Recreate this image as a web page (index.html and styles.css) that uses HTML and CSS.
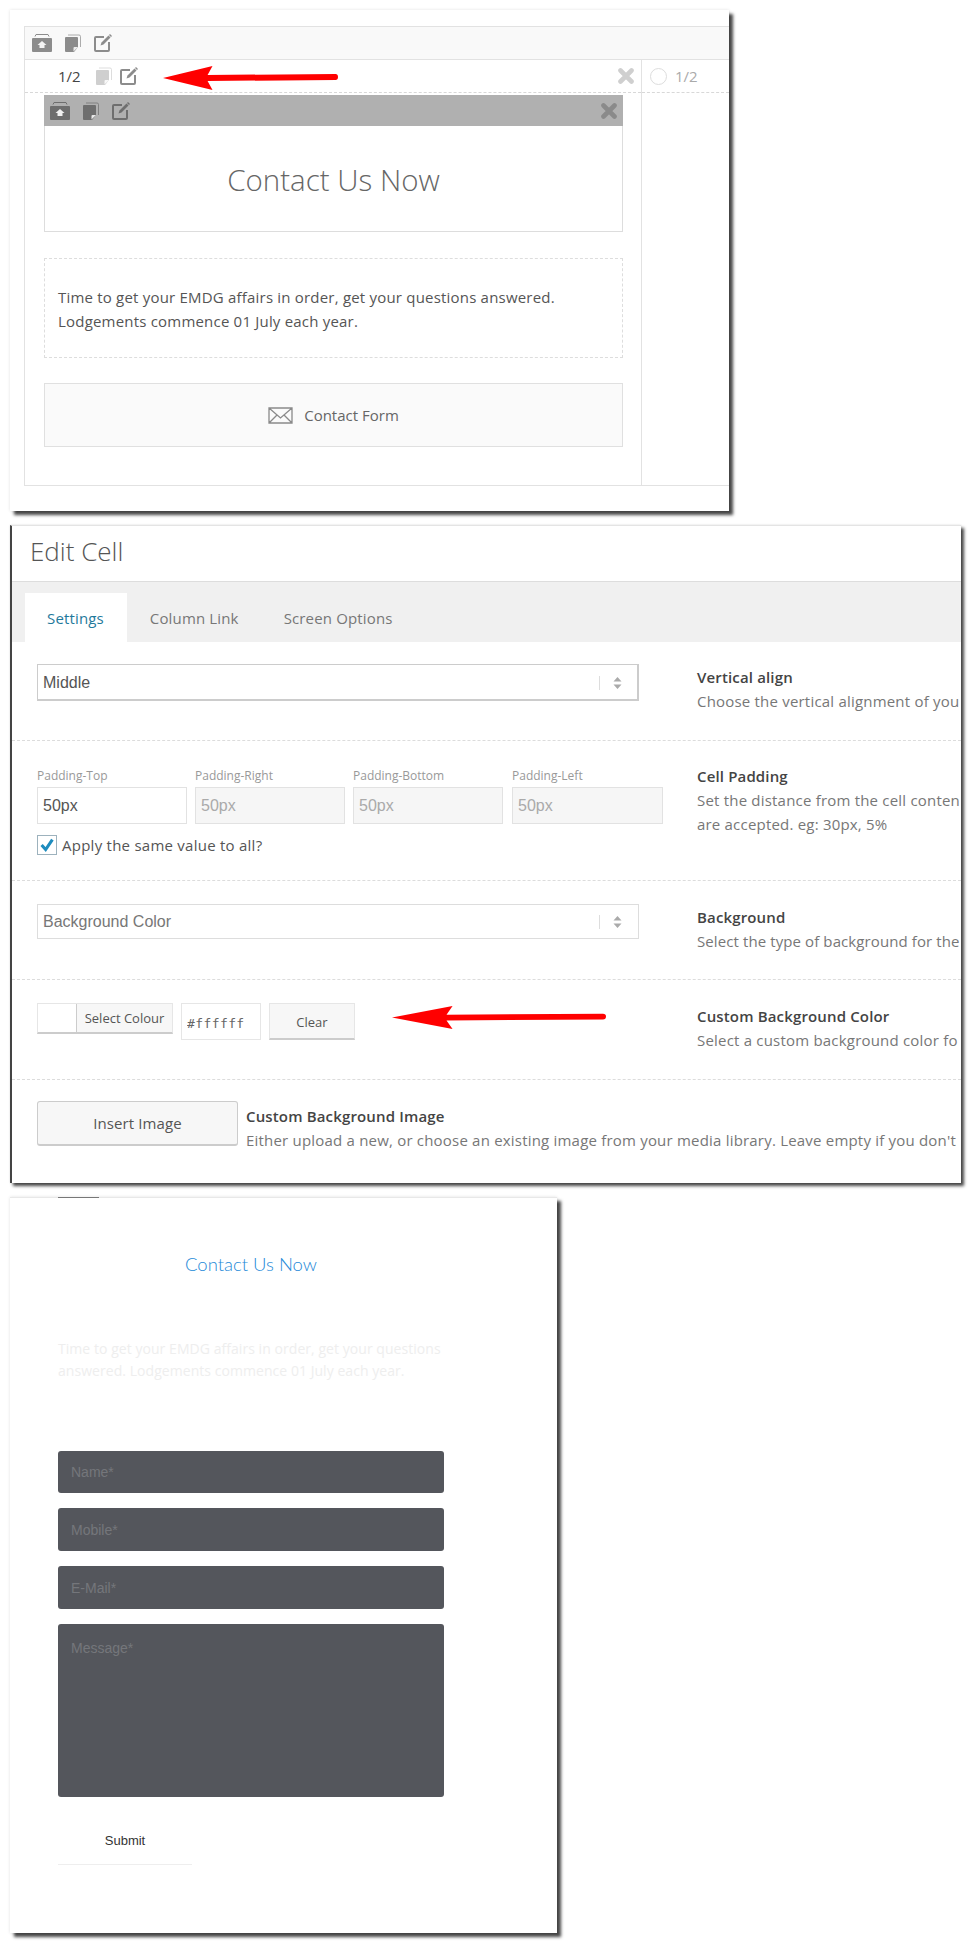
FILE: index.html
```html
<!DOCTYPE html>
<html lang="en">
<head>
<meta charset="utf-8">
<title>Edit Cell</title>
<link rel="stylesheet" href="styles.css">
</head>
<body>
<svg class="defs" width="0" height="0" aria-hidden="true">
  <symbol id="i-archive" viewBox="0 0 20 18">
    <path d="M3 2.500 4 .5h12l1 2" fill="none" stroke="currentColor" stroke-width="1"/>
    <rect x="0" y="4" width="20" height="14" rx="1" fill="currentColor"/>
    <path d="M10 7l4.500 4H12.500v3h-5v-3H5.500z" fill="#fff" fill-opacity=".9"/>
  </symbol>
  <symbol id="i-copy" viewBox="0 0 17 18">
    <path d="M4 1h11a1.500 1.500 0 0 1 1.500 1.500V13" fill="none" stroke="currentColor" stroke-width="1" opacity=".7"/>
    <path d="M1 4a1 1 0 0 1 1-1h11a1 1 0 0 1 1 1v9l-4 5H2a1 1 0 0 1-1-1z" fill="currentColor"/>
    <path d="M9.500 17.500V14q0-1 1-1H14z" fill="#fff" fill-opacity=".85"/>
  </symbol>
  <symbol id="i-edit" viewBox="0 0 18 18">
    <path d="M10 3H2a1 1 0 0 0-1 1v12a1 1 0 0 0 1 1h12a1 1 0 0 0 1-1V8" fill="none" stroke="currentColor" stroke-width="2"/>
    <path d="M6.500 11.500 7.500 8.500 14.500 1.500 16.500 3.500 9.500 10.500z" fill="currentColor"/>
    <path d="M15.500.5 17.500 2.500" stroke="currentColor" stroke-width="1.400"/>
  </symbol>
  <symbol id="i-x" viewBox="0 0 16 16">
    <path d="M2.500 2.500l11 11M13.500 2.500l-11 11" stroke="currentColor" stroke-width="4.600" stroke-linecap="round" fill="none"/>
  </symbol>
  <symbol id="i-updown" viewBox="0 0 9 12">
    <path d="M4.500 0 8.500 4.500H.5zM4.500 12 .5 7.500h8z" fill="currentColor"/>
  </symbol>
  <symbol id="i-arrow" viewBox="0 0 212 24" preserveAspectRatio="none">
    <path d="M0 12 60 0 54 9 209 8a3 3 0 0 1 0 6L54 15 60 24z" fill="#f00"/>
  </symbol>
</svg>

<section class="panel panel-grid">
  <svg class="arrow arrow-top"><use href="#i-arrow"/></svg>
  <div class="grid-table">
    <div class="grid-head">
      <svg class="ic ic-archive"><use href="#i-archive"/></svg>
      <svg class="ic ic-copy"><use href="#i-copy"/></svg>
      <svg class="ic ic-edit"><use href="#i-edit"/></svg>
    </div>
    <div class="grid-cols">
      <div class="col-main">
        <div class="cell-head">
          <span class="ratio">1/2</span>
          <svg class="ic ic-copy is-light"><use href="#i-copy"/></svg>
          <svg class="ic ic-edit"><use href="#i-edit"/></svg>
          <svg class="ic ic-x is-light"><use href="#i-x"/></svg>
        </div>
        <div class="block">
          <div class="block-head">
            <svg class="ic ic-archive"><use href="#i-archive"/></svg>
            <svg class="ic ic-copy"><use href="#i-copy"/></svg>
            <svg class="ic ic-edit"><use href="#i-edit"/></svg>
            <svg class="ic ic-x"><use href="#i-x"/></svg>
          </div>
          <div class="block-title">Contact Us Now</div>
          <div class="block-text">Time to get your EMDG affairs in order, get your questions answered.<br>Lodgements commence 01 July each year.</div>
          <div class="block-form">
            <svg class="envelope" viewBox="0 0 25 17"><path d="M1 1h23v15H1zM1 1l11.500 10L24 1M1 16l8-8M24 16l-8-8" fill="none" stroke="#8a8a8a" stroke-width="1.300"/></svg>
            <span>Contact Form</span>
          </div>
        </div>
      </div>
      <div class="col-side">
        <div class="cell-head side-head">
          <span class="radio"></span>
          <span class="ratio is-muted">1/2</span>
        </div>
      </div>
    </div>
  </div>
</section>

<section class="panel panel-edit">
  <svg class="arrow arrow-mid"><use href="#i-arrow"/></svg>
  <h1 class="edit-title">Edit Cell</h1>
  <nav class="tabs">
    <a class="tab is-active">Settings</a>
    <a class="tab">Column Link</a>
    <a class="tab">Screen Options</a>
  </nav>

  <div class="row row-valign">
    <div class="ctl">
      <div class="select is-focus"><span class="select-val">Middle</span><span class="select-sep"></span><svg class="updown"><use href="#i-updown"/></svg></div>
    </div>
    <div class="info">
      <div class="info-title">Vertical align</div>
      <div class="info-desc">Choose the vertical alignment of you</div>
    </div>
  </div>

  <div class="row row-padding">
    <div class="ctl">
      <div class="pads">
        <label class="pad"><span>Padding-Top</span><input value="50px"></label>
        <label class="pad"><span>Padding-Right</span><input value="50px" disabled></label>
        <label class="pad"><span>Padding-Bottom</span><input value="50px" disabled></label>
        <label class="pad"><span>Padding-Left</span><input value="50px" disabled></label>
      </div>
      <div class="apply">
        <span class="checkbox"><svg viewBox="0 0 20 20"><path d="M4 10l4.500 5L16 4" fill="none" stroke="#1e8cbe" stroke-width="3.400"/></svg></span>
        <span>Apply the same value to all?</span>
      </div>
    </div>
    <div class="info">
      <div class="info-title">Cell Padding</div>
      <div class="info-desc">Set the distance from the cell conten<br>are accepted. eg: 30px, 5%</div>
    </div>
  </div>

  <div class="row row-bg">
    <div class="ctl">
      <div class="select"><span class="select-val is-muted">Background Color</span><span class="select-sep"></span><svg class="updown"><use href="#i-updown"/></svg></div>
    </div>
    <div class="info">
      <div class="info-title">Background</div>
      <div class="info-desc">Select the type of background for the</div>
    </div>
  </div>

  <div class="row row-color">
    <div class="ctl color-ctl">
      <div class="color-pick"><span class="swatch"></span><span class="color-label">Select Colour</span></div>
      <input class="hex" value="#ffffff">
      <button class="clear" type="button">Clear</button>
    </div>
    <div class="info">
      <div class="info-title">Custom Background Color</div>
      <div class="info-desc">Select a custom background color fo</div>
    </div>
  </div>

  <div class="row row-image">
    <button class="insert" type="button">Insert Image</button>
    <div class="info image-info">
      <div class="info-title">Custom Background Image</div>
      <div class="info-desc">Either upload a new, or choose an existing image from your media library. Leave empty if you don't</div>
    </div>
  </div>
</section>

<section class="panel panel-form">
  <div class="frag"></div>
  <h2 class="form-title">Contact Us Now</h2>
  <p class="form-text">Time to get your EMDG affairs in order, get your questions answered. Lodgements commence 01 July each year.</p>
  <form class="form">
    <input class="field field-name" placeholder="Name*">
    <input class="field" placeholder="Mobile*">
    <input class="field" placeholder="E-Mail*">
    <textarea class="field field-msg" placeholder="Message*"></textarea>
    <button class="submit" type="button">Submit</button>
  </form>
</section>
</body>
</html>
```

FILE: styles.css
```css
* { box-sizing: border-box; }
html, body { margin: 0; padding: 0; height: 1944px; overflow: hidden; background: #fff; }
body { font-family: "Open Sans", sans-serif; color: #555; position: relative; padding-top: 10px; }
.defs { position: absolute; }
.ic { display: block; flex: none; color: #8c8c8c; }
.ic-archive { width: 20px; height: 18px; }
.ic-copy { width: 17px; height: 18px; }
.ic-edit { width: 18px; height: 18px; }
.ic-x { width: 16px; height: 16px; }
.is-light { color: #cfcfcf; }

.panel { position: relative; background: #fff; margin-left: 10px; }
.arrow { position: absolute; z-index: 2; overflow: visible; }
.arrow-top { left: 153px; top: 56px; width: 175px; height: 24px; }
.arrow-mid { left: 380px; top: 480px; width: 214px; height: 23px; }

.panel-grid { width: 719px; height: 501px; padding: 16px 0 0 14px;
  box-shadow: 4px 4px 3px rgba(0,0,0,.72), 0 0 3px rgba(0,0,0,.12); }
.grid-table { height: 460px; border: 1px solid #e2e2e2; border-right: 0; display: flex; flex-direction: column; }
.grid-head { height: 33px; flex: none; background: #f9f9f9; border-bottom: 1px solid #e2e2e2; display: flex; align-items: center; padding-left: 7px; }
.grid-head .ic-copy, .block-head .ic-copy { margin-left: 12px; }
.grid-head .ic-edit, .block-head .ic-edit { margin-left: 13px; }
.grid-cols { flex: 1; display: flex; }
.col-main { width: 617px; flex: none; border-right: 1px solid #e2e2e2; }
.col-side { flex: 1; }
.cell-head { height: 33px; border-bottom: 1px dashed #d8d8d8; display: flex; align-items: center; padding-left: 33px; font-size: 15px; }
.ratio { color: #444; width: 37px; flex: none; }
.ratio.is-muted { color: #aaa; width: auto; }
.cell-head .ic-edit { margin-left: 8px; }
.cell-head .ic-x { margin-left: auto; margin-right: 7px; }
.side-head { padding-left: 8px; }
.radio { width: 17px; height: 17px; border: 1px solid #ddd; border-radius: 50%; margin-right: 8px; }

.block { margin: 2px 0 0 19px; width: 579px; }
.block-head { height: 31px; background: #b0b0b0; display: flex; align-items: center; padding-left: 6px; }
.block-head .ic { color: #6e6e6e; }
.block-head .ic-x { color: #8a8a8a; margin-left: auto; margin-right: 6px; }
.block-title { height: 106px; border: 1px solid #ddd; border-top: 0; display: flex; align-items: center; justify-content: center;
  font-size: 29.500px; font-weight: 300; color: #666; padding-top: 2px; }
.block-text { margin-top: 26px; height: 100px; border: 1px dashed #ddd; padding: 26px 13px; font-size: 15px; letter-spacing: .2px; line-height: 24px; color: #555; white-space: nowrap; }
.block-form { margin-top: 25px; height: 64px; border: 1px solid #e0e0e0; background: #fafafa; display: flex; align-items: center; justify-content: center; gap: 11px; font-size: 15px; color: #666; }
.envelope { width: 25px; height: 17px; flex: none; }

.panel-edit { width: 951px; height: 658px; margin-top: 14px; border-left: 2px solid #444; border-top: 1px solid #e4e4e4;
  box-shadow: 3px 3px 3px rgba(0,0,0,.72), 0 0 2px rgba(0,0,0,.12); }
.edit-title { margin: 0; height: 56px; padding: 6px 0 0 18px; font-size: 26px; line-height: 38px; font-weight: 300; color: #555; border-bottom: 1px solid #ddd; }
.tabs { height: 60px; background: #f0f0f0; padding: 11px 0 0 13px; display: flex; font-size: 15px; letter-spacing: .15px; color: #777; }
.tab { height: 49px; padding: 15px 23px 0 22px; }
.tab + .tab { padding-left: 23px; padding-right: 22px; }
.tab.is-active { background: #fff; color: #1f7a9c; }

.row { padding-left: 25px; display: flex; border-bottom: 1px dashed #dcdcdc; overflow: hidden; width: 949px; }
.row-valign { height: 99px; padding-top: 22px; }
.row-padding { height: 140px; padding-top: 27px; }
.row-bg { height: 99px; padding-top: 23px; }
.row-color { height: 100px; padding-top: 23px; }
.row-image { height: 103px; padding-top: 21px; border-bottom: 0; }
.ctl { width: 660px; flex: none; }
.info { flex: none; white-space: nowrap; font-size: 15px; letter-spacing: .2px; line-height: 24px; color: #777; }
.row-padding .info { margin-top: -4px; }
.row-valign .info { margin-top: 1px; }
.row-bg .info, .row-color .info { margin-top: 1px; }
.row-bg .info-desc { letter-spacing: .1px; }
.info-title { font-weight: 600; color: #444; letter-spacing: .15px; }

.select { width: 602px; height: 35px; border: 1px solid #ddd; display: flex; align-items: center; padding: 0 16px 0 5px; font-family: "Liberation Sans", sans-serif; font-size: 16px; color: #555; }
.select.is-focus { height: 37px; border: 2px solid #ccc; border-top-width: 1px; border-left-width: 1px; padding: 1px 15px 0 5px; }
.select-val { flex: 1; }
.select-val.is-muted { color: #777; }
.select-sep { width: 1px; height: 14px; background: #ddd; margin-right: 13px; }
.updown { width: 9px; height: 12px; color: #aaa; }

.pads { display: flex; }
.pad { width: 150px; margin-right: 8px; display: block; }
.pad:last-child { width: 151px; margin: 0 0 0 1px; }
.pad span { display: block; height: 16px; margin-bottom: 3px; font-size: 12px; line-height: 16px; color: #999; white-space: nowrap; }
.pad input { display: block; width: 100%; height: 37px; border: 1px solid #e2e2e2; padding: 0 5px; background: #fff; color: #555; font: 16px "Liberation Sans", sans-serif; }
.pad input:disabled { background: #f6f6f6; color: #aaa; }
.apply { display: flex; align-items: center; gap: 5px; margin-top: 11px; font-size: 15px; letter-spacing: .25px; color: #555; }
.checkbox { width: 20px; height: 20px; border: 1px solid #9db2bd; display: block; flex: none; }
.checkbox svg { display: block; width: 18px; height: 18px; }

.color-ctl { display: flex; align-items: flex-start; gap: 8px; }
.color-pick { width: 136px; height: 31px; border: 1px solid #e6e6e6; border-bottom: 2px solid #ccc; display: flex; }
.swatch { width: 39px; flex: none; border-right: 1px solid #ccc; background: #fff; }
.color-label { flex: 1; background: #f7f7f7; font-size: 13px; line-height: 28px; text-align: center; color: #555; white-space: nowrap; }
.hex { width: 80px; height: 37px; border: 1px solid #e6e6e6; padding: 3px 0 0 5px; font: 13px "DejaVu Sans Mono", monospace; color: #666; letter-spacing: .4px; }
.clear { width: 86px; height: 37px; border: 1px solid #e6e6e6; border-bottom: 2px solid #ccc; background: #f7f7f7; font: 13px "Open Sans", sans-serif; color: #555; padding: 1px 0 0; }
.insert { width: 201px; height: 45px; flex: none; border: 1px solid #ccc; border-bottom-width: 2px; border-radius: 3px; background: #f7f7f7; font: 15px "Open Sans", sans-serif; letter-spacing: .1px; color: #555; padding: 0; }
.image-info { margin: 3px 0 0 8px; }
.image-info .info-desc { letter-spacing: .2px; }

.panel-form { width: 547px; height: 736px; margin-top: 14px; padding-left: 48px; border-top: 1px solid #e8e8e8;
  box-shadow: 4px 4px 3px rgba(0,0,0,.72), 0 0 3px rgba(0,0,0,.12); }
.frag { width: 41px; height: 1px; background: #777; margin-top: -1px; }
.form-title { margin: 54px 0 0; width: 386px; height: 24px; text-align: center; font: 300 18.500px/24px Lato, sans-serif; color: #1f8ad8; }
.form-text { margin: 62px 0 0; width: 386px; height: 44px; font-size: 14px; letter-spacing: .05px; line-height: 22px; color: #eee; }
.form { margin: 69px 0 0; width: 386px; display: flex; flex-direction: column; gap: 15px; }
.field { display: block; width: 386px; height: 43px; border: 0; border-radius: 3px; background: #54565c; padding: 0 13px; font: 14px "Liberation Sans", sans-serif; color: #ddd; resize: none; }
.field-name { height: 42px; }
.field-msg { height: 173px; padding-top: 16px; }
.field::placeholder { color: #74767b; opacity: 1; }
.submit { margin-top: 5px; width: 134px; height: 48px; border: 0; border-bottom: 1px solid #eee; background: #fff; font: 13px "Liberation Sans", sans-serif; color: #333; padding: 0; }
```
